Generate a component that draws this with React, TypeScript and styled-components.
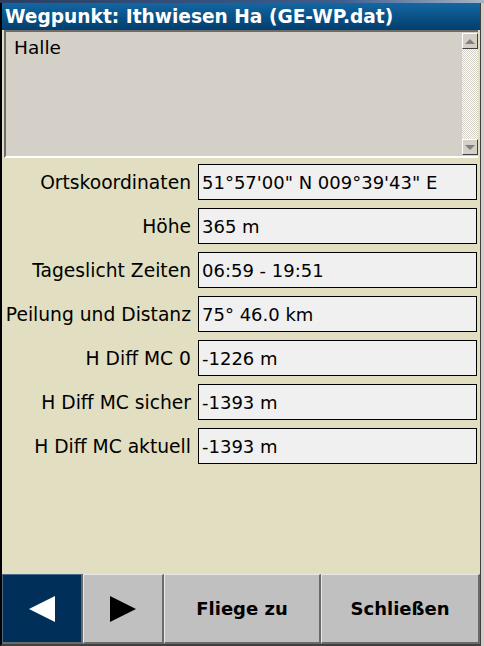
import styled, { createGlobalStyle } from "styled-components";

const GlobalStyle = createGlobalStyle`
  html, body {
    margin: 0;
    padding: 0;
    background: #d4d0c8;
  }
  #root {
    width: 484px;
    height: 646px;
  }
`;

const rows = [
  { label: "Ortskoordinaten", value: "51°57'00\" N 009°39'43\" E" },
  { label: "Höhe", value: "365 m" },
  { label: "Tageslicht Zeiten", value: "06:59 - 19:51" },
  { label: "Peilung und Distanz", value: "75° 46.0 km" },
  { label: "H Diff MC 0", value: "-1226 m" },
  { label: "H Diff MC sicher", value: "-1393 m" },
  { label: "H Diff MC aktuell", value: "-1393 m" },
];

function Triangle({ dir, color }: { dir: "left" | "right"; color: string }) {
  const points = dir === "left" ? "26,0 26,26 0,13" : "0,0 26,13 0,26";
  return (
    <svg width="26" height="26" viewBox="0 0 26 26">
      <polygon points={points} fill={color} />
    </svg>
  );
}

function WaypointDialog() {
  return (
    <Page>
      <GlobalStyle />
      <TopStrip />
      <Window>
        <TitleBar>Wegpunkt: Ithwiesen Ha (GE-WP.dat)</TitleBar>
        <Memo>
          <MemoText>Halle</MemoText>
          <ScrollBar>
            <ScrollButton>
              <ScrollArrow $up />
            </ScrollButton>
            <ScrollTrack />
            <ScrollButton>
              <ScrollArrow />
            </ScrollButton>
          </ScrollBar>
        </Memo>

        <Form>
          {rows.map((row, idx) => (
            <Row key={idx}>
              <Label>{row.label}</Label>
              <Value>{row.value}</Value>
            </Row>
          ))}
        </Form>

        <ButtonBar>
          <NavButton $active>
            <Triangle dir="left" color="#ffffff" />
          </NavButton>
          <NavButton>
            <Triangle dir="right" color="#000000" />
          </NavButton>
          <TextButton>Fliege zu</TextButton>
          <TextButton>Schließen</TextButton>
        </ButtonBar>
      </Window>
    </Page>
  );
}

const Page = styled.div`
  width: 484px;
  height: 646px;
  display: flex;
  flex-direction: column;
  overflow: hidden;
  font-family: "DejaVu Sans", Verdana, sans-serif;
`;

const TopStrip = styled.div`
  height: 3px;
  background: linear-gradient(to right, #2a3f63 0%, #3b5d8f 70%, #a8b4c4 100%);
`;

const Window = styled.div`
  flex: 1;
  display: flex;
  flex-direction: column;
  background: #e2dec1;
  border-left: 2px solid #000000;
  border-right: 1px solid #404040;
  border-bottom: 2px solid #404040;
  margin-right: 3px;
  box-sizing: border-box;
`;

const TitleBar = styled.div`
  height: 27px;
  padding-left: 3px;
  display: flex;
  align-items: center;
  color: #ffffff;
  font-weight: bold;
  font-size: 18.6px;
  background: linear-gradient(to bottom, #1467a2 0%, #0a5288 50%, #033e6e 100%);
  white-space: nowrap;
`;

const Memo = styled.div`
  height: 128px;
  margin: 0 2px 0 2px;
  display: flex;
  background: #d4d0c8;
  border-top: 2px solid #6e6c68;
  border-left: 2px solid #6e6c68;
  border-bottom: 2px solid #ffffff;
  box-sizing: border-box;
`;

const MemoText = styled.div`
  flex: 1;
  padding: 5px 0 0 8px;
  font-size: 18.5px;
  color: #000000;
`;

const ScrollBar = styled.div`
  width: 16px;
  display: flex;
  flex-direction: column;
  padding: 1px 0;
`;

const ScrollButton = styled.div`
  height: 16px;
  display: flex;
  align-items: center;
  justify-content: center;
  background: #d4d0c8;
  border-top: 1px solid #ffffff;
  border-left: 1px solid #ffffff;
  border-right: 1px solid #404040;
  border-bottom: 1px solid #404040;
  box-sizing: border-box;
`;

const ScrollArrow = styled.div<{ $up?: boolean }>`
  width: 0;
  height: 0;
  border-left: 5px solid transparent;
  border-right: 5px solid transparent;
  ${(p) =>
    p.$up
      ? "border-bottom: 5px solid #808080;"
      : "border-top: 5px solid #808080;"}
`;

const ScrollTrack = styled.div`
  flex: 1;
  background-color: #e8e6e2;
  background-image: repeating-conic-gradient(#d4d0c8 0% 25%, #ffffff 0% 50%);
  background-size: 2px 2px;
`;

const Form = styled.div`
  flex: 1;
  display: flex;
  flex-direction: column;
  gap: 8px;
  padding: 6px 3px 0 0;
`;

const Row = styled.div`
  display: grid;
  grid-template-columns: 196px 1fr;
  align-items: center;
  height: 36px;
`;

const Label = styled.div`
  text-align: right;
  padding-right: 7px;
  font-size: 18.7px;
  color: #000000;
  white-space: nowrap;
`;

const Value = styled.div`
  height: 36px;
  display: flex;
  align-items: center;
  padding-left: 3px;
  font-size: 18px;
  color: #000000;
  background: #f0f0f0;
  border: 1px solid #000000;
  box-sizing: border-box;
  white-space: nowrap;
`;

const ButtonBar = styled.div`
  height: 70px;
  display: grid;
  grid-template-columns: 81px 81px 157px 1fr;
`;

const NavButton = styled.div<{ $active?: boolean }>`
  display: flex;
  align-items: center;
  justify-content: center;
  background: ${(p) => (p.$active ? "#00305a" : "#c0c0c0")};
  border-top: 1px solid ${(p) => (p.$active ? "#4a6a8a" : "#e8e8e8")};
  border-left: 1px solid ${(p) => (p.$active ? "#4a6a8a" : "#e8e8e8")};
  border-right: 2px solid #6a6a6a;
  border-bottom: 2px solid #6a6a6a;
  box-sizing: border-box;
`;

const TextButton = styled.div`
  display: flex;
  align-items: center;
  justify-content: center;
  background: #c0c0c0;
  font-weight: bold;
  font-size: 18px;
  color: #000000;
  border-top: 1px solid #e8e8e8;
  border-left: 1px solid #e8e8e8;
  border-right: 2px solid #6a6a6a;
  border-bottom: 2px solid #6a6a6a;
  box-sizing: border-box;
`;

export default WaypointDialog;
